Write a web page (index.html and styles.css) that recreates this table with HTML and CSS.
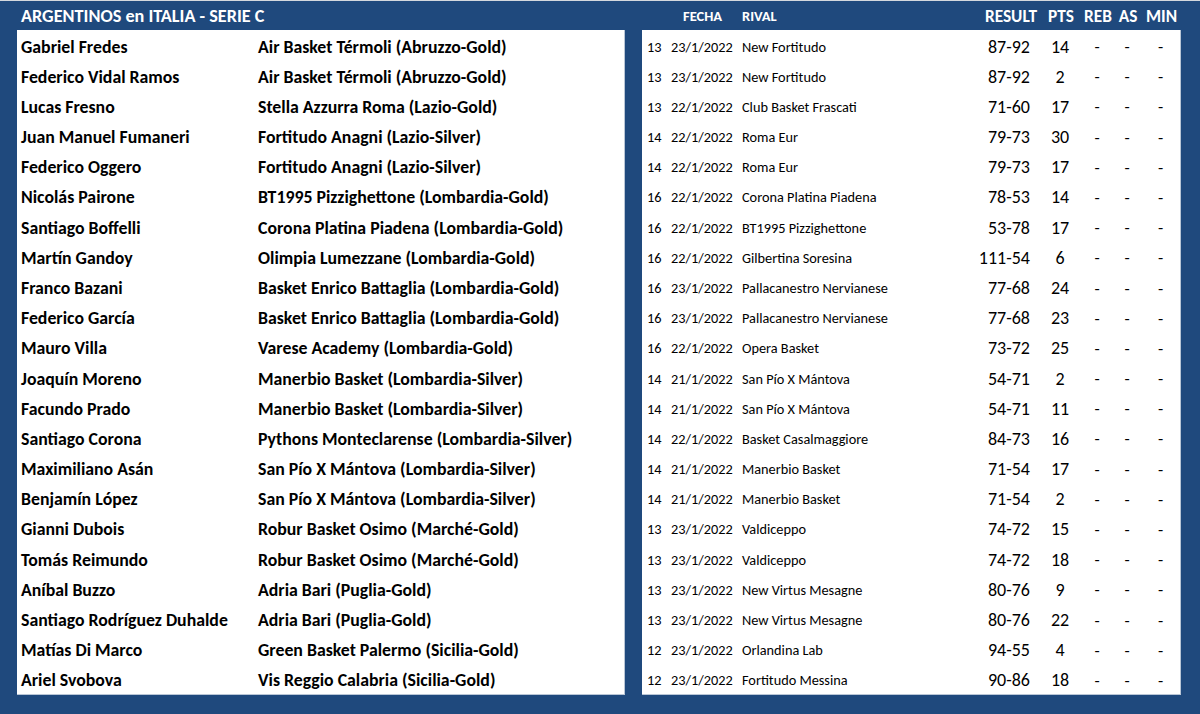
FILE: index.html
```html
<!DOCTYPE html>
<html lang="es">
<head>
<meta charset="utf-8">
<title>Argentinos en Italia - Serie C</title>
<link rel="stylesheet" href="styles.css">
</head>
<body>
<div class="page">
  <div class="title">ARGENTINOS en ITALIA - SERIE C</div>
  <div class="head-right">
    <span></span>
    <span class="h-fecha">FECHA</span>
    <span class="h-rival">RIVAL</span>
    <span class="h-result">RESULT</span>
    <span class="h-stat">PTS</span>
    <span class="h-stat">REB</span>
    <span class="h-stat">AS</span>
    <span class="h-stat">MIN</span>
  </div>
  <div class="panel left">
    <div class="lrow"><span>Gabriel Fredes</span><span>Air Basket Térmoli (Abruzzo-Gold)</span></div>
    <div class="lrow"><span>Federico Vidal Ramos</span><span>Air Basket Térmoli (Abruzzo-Gold)</span></div>
    <div class="lrow"><span>Lucas Fresno</span><span>Stella Azzurra Roma (Lazio-Gold)</span></div>
    <div class="lrow"><span>Juan Manuel Fumaneri</span><span>Fortitudo Anagni (Lazio-Silver)</span></div>
    <div class="lrow"><span>Federico Oggero</span><span>Fortitudo Anagni (Lazio-Silver)</span></div>
    <div class="lrow"><span>Nicolás Pairone</span><span>BT1995 Pizzighettone (Lombardia-Gold)</span></div>
    <div class="lrow"><span>Santiago Boffelli</span><span>Corona Platina Piadena (Lombardia-Gold)</span></div>
    <div class="lrow"><span>Martín Gandoy</span><span>Olimpia Lumezzane (Lombardia-Gold)</span></div>
    <div class="lrow"><span>Franco Bazani</span><span>Basket Enrico Battaglia (Lombardia-Gold)</span></div>
    <div class="lrow"><span>Federico García</span><span>Basket Enrico Battaglia (Lombardia-Gold)</span></div>
    <div class="lrow"><span>Mauro Villa</span><span>Varese Academy (Lombardia-Gold)</span></div>
    <div class="lrow"><span>Joaquín Moreno</span><span>Manerbio Basket (Lombardia-Silver)</span></div>
    <div class="lrow"><span>Facundo Prado</span><span>Manerbio Basket (Lombardia-Silver)</span></div>
    <div class="lrow"><span>Santiago Corona</span><span>Pythons Monteclarense (Lombardia-Silver)</span></div>
    <div class="lrow"><span>Maximiliano Asán</span><span>San Pío X Mántova (Lombardia-Silver)</span></div>
    <div class="lrow"><span>Benjamín López</span><span>San Pío X Mántova (Lombardia-Silver)</span></div>
    <div class="lrow"><span>Gianni Dubois</span><span>Robur Basket Osimo (Marché-Gold)</span></div>
    <div class="lrow"><span>Tomás Reimundo</span><span>Robur Basket Osimo (Marché-Gold)</span></div>
    <div class="lrow"><span>Aníbal Buzzo</span><span>Adria Bari (Puglia-Gold)</span></div>
    <div class="lrow"><span>Santiago Rodríguez Duhalde</span><span>Adria Bari (Puglia-Gold)</span></div>
    <div class="lrow"><span>Matías Di Marco</span><span>Green Basket Palermo (Sicilia-Gold)</span></div>
    <div class="lrow"><span>Ariel Svobova</span><span>Vis Reggio Calabria (Sicilia-Gold)</span></div>
  </div>
  <div class="panel right">
    <div class="rrow"><span>13</span><span>23/1/2022</span><span>New Fortitudo</span><span class="res">87-92</span><span class="pts">14</span><span class="st">-</span><span class="st">-</span><span class="st">-</span></div>
    <div class="rrow"><span>13</span><span>23/1/2022</span><span>New Fortitudo</span><span class="res">87-92</span><span class="pts">2</span><span class="st">-</span><span class="st">-</span><span class="st">-</span></div>
    <div class="rrow"><span>13</span><span>22/1/2022</span><span>Club Basket Frascati</span><span class="res">71-60</span><span class="pts">17</span><span class="st">-</span><span class="st">-</span><span class="st">-</span></div>
    <div class="rrow"><span>14</span><span>22/1/2022</span><span>Roma Eur</span><span class="res">79-73</span><span class="pts">30</span><span class="st">-</span><span class="st">-</span><span class="st">-</span></div>
    <div class="rrow"><span>14</span><span>22/1/2022</span><span>Roma Eur</span><span class="res">79-73</span><span class="pts">17</span><span class="st">-</span><span class="st">-</span><span class="st">-</span></div>
    <div class="rrow"><span>16</span><span>22/1/2022</span><span>Corona Platina Piadena</span><span class="res">78-53</span><span class="pts">14</span><span class="st">-</span><span class="st">-</span><span class="st">-</span></div>
    <div class="rrow"><span>16</span><span>22/1/2022</span><span>BT1995 Pizzighettone</span><span class="res">53-78</span><span class="pts">17</span><span class="st">-</span><span class="st">-</span><span class="st">-</span></div>
    <div class="rrow"><span>16</span><span>22/1/2022</span><span>Gilbertina Soresina</span><span class="res">111-54</span><span class="pts">6</span><span class="st">-</span><span class="st">-</span><span class="st">-</span></div>
    <div class="rrow"><span>16</span><span>23/1/2022</span><span>Pallacanestro Nervianese</span><span class="res">77-68</span><span class="pts">24</span><span class="st">-</span><span class="st">-</span><span class="st">-</span></div>
    <div class="rrow"><span>16</span><span>23/1/2022</span><span>Pallacanestro Nervianese</span><span class="res">77-68</span><span class="pts">23</span><span class="st">-</span><span class="st">-</span><span class="st">-</span></div>
    <div class="rrow"><span>16</span><span>22/1/2022</span><span>Opera Basket</span><span class="res">73-72</span><span class="pts">25</span><span class="st">-</span><span class="st">-</span><span class="st">-</span></div>
    <div class="rrow"><span>14</span><span>21/1/2022</span><span>San Pío X Mántova</span><span class="res">54-71</span><span class="pts">2</span><span class="st">-</span><span class="st">-</span><span class="st">-</span></div>
    <div class="rrow"><span>14</span><span>21/1/2022</span><span>San Pío X Mántova</span><span class="res">54-71</span><span class="pts">11</span><span class="st">-</span><span class="st">-</span><span class="st">-</span></div>
    <div class="rrow"><span>14</span><span>22/1/2022</span><span>Basket Casalmaggiore</span><span class="res">84-73</span><span class="pts">16</span><span class="st">-</span><span class="st">-</span><span class="st">-</span></div>
    <div class="rrow"><span>14</span><span>21/1/2022</span><span>Manerbio Basket</span><span class="res">71-54</span><span class="pts">17</span><span class="st">-</span><span class="st">-</span><span class="st">-</span></div>
    <div class="rrow"><span>14</span><span>21/1/2022</span><span>Manerbio Basket</span><span class="res">71-54</span><span class="pts">2</span><span class="st">-</span><span class="st">-</span><span class="st">-</span></div>
    <div class="rrow"><span>13</span><span>23/1/2022</span><span>Valdiceppo</span><span class="res">74-72</span><span class="pts">15</span><span class="st">-</span><span class="st">-</span><span class="st">-</span></div>
    <div class="rrow"><span>13</span><span>23/1/2022</span><span>Valdiceppo</span><span class="res">74-72</span><span class="pts">18</span><span class="st">-</span><span class="st">-</span><span class="st">-</span></div>
    <div class="rrow"><span>13</span><span>23/1/2022</span><span>New Virtus Mesagne</span><span class="res">80-76</span><span class="pts">9</span><span class="st">-</span><span class="st">-</span><span class="st">-</span></div>
    <div class="rrow"><span>13</span><span>23/1/2022</span><span>New Virtus Mesagne</span><span class="res">80-76</span><span class="pts">22</span><span class="st">-</span><span class="st">-</span><span class="st">-</span></div>
    <div class="rrow"><span>12</span><span>23/1/2022</span><span>Orlandina Lab</span><span class="res">94-55</span><span class="pts">4</span><span class="st">-</span><span class="st">-</span><span class="st">-</span></div>
    <div class="rrow"><span>12</span><span>23/1/2022</span><span>Fortitudo Messina</span><span class="res">90-86</span><span class="pts">18</span><span class="st">-</span><span class="st">-</span><span class="st">-</span></div>
  </div>
</div>
</body>
</html>
```
FILE: styles.css
```css
html, body {
  margin: 0;
  padding: 0;
}
body {
  background: #1f497d;
  border-top: 1px solid #d4d8de;
  height: 713px;
  overflow: hidden;
  font-family: Carlito, "Open Sans", "Liberation Sans", sans-serif;
  color: #000;
}
.page {
  display: grid;
  grid-template-columns: 608px 539px;
  grid-template-rows: 29px 665px;
  column-gap: 17px;
  padding-left: 17px;
}
.title {
  color: #fff;
  font-weight: bold;
  font-size: 18.2px;
  padding-left: 4px;
  align-self: center;
  padding-top: 1px;
  white-space: nowrap;
}
.head-right {
  display: grid;
  grid-template-columns: 29px 71px 1fr 80px 42px 32px 28px 39px;
  align-items: center;
  color: #fff;
  font-weight: bold;
  padding-top: 1px;
  white-space: nowrap;
}
.h-fecha, .h-rival {
  font-size: 14.5px;
}
.h-fecha {
  padding-left: 12px;
}
.h-result {
  font-size: 17.3px;
  text-align: right;
  padding-right: 3px;
}
.h-stat {
  font-size: 17.3px;
  text-align: center;
}
.panel {
  background: #fff;
  display: grid;
  grid-template-rows: repeat(22, 1fr);
  border-right: 1px solid #b9c6d6;
  border-bottom: 1px solid #b9c6d6;
}
.lrow {
  display: grid;
  grid-template-columns: 237px 1fr;
  align-items: center;
  padding: 3px 0 0 4px;
  font-weight: bold;
  font-size: 17.8px;
  white-space: nowrap;
}
.rrow {
  display: grid;
  grid-template-columns: 29px 71px 1fr 80px 42px 32px 28px 39px;
  align-items: center;
  padding-top: 3px;
  font-size: 14.3px;
  white-space: nowrap;
}
.rrow span:first-child {
  padding-left: 5px;
}
.rrow .res {
  font-size: 18px;
  text-align: right;
  padding-right: 9px;
}
.rrow .pts {
  font-size: 18px;
  text-align: center;
}
.rrow .st {
  font-size: 17px;
  text-align: center;
}
```
